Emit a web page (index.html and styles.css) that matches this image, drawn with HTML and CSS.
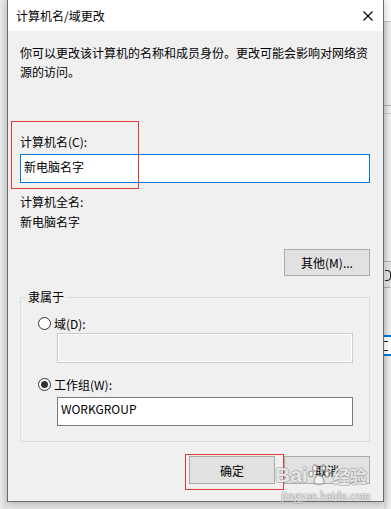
FILE: index.html
```html
<!DOCTYPE html>
<html lang="zh-CN">
<head>
    <meta charset="UTF-8">
    <meta name="viewport" content="width=device-width, initial-scale=1.0">
    <title>计算机名/域更改</title>
    <link rel="stylesheet" href="styles.css">
</head>
<body>
    <div class="screen">
        <div class="side side-left"></div>

        <div class="dialog">
            <div class="titlebar">
                <span class="title">计算机名/域更改</span>
                <svg class="close" width="10" height="10" viewBox="0 0 10 10">
                    <path d="M0.5 0.5 L9.5 9.5 M9.5 0.5 L0.5 9.5" stroke="#000" stroke-width="1.1" fill="none"/>
                </svg>
            </div>

            <div class="content">
                <p class="desc">你可以更改该计算机的名称和成员身份。更改可能会影响对网络资源的访问。</p>

                <div class="field-label">计算机名(C):</div>
                <div class="text-input focused">新电脑名字</div>

                <div class="info-label">计算机全名:</div>
                <div class="info-value">新电脑名字</div>

                <div class="row-right">
                    <button class="btn btn-more">其他(M)...</button>
                </div>

                <fieldset class="group">
                    <legend>隶属于</legend>

                    <div class="radio-row first">
                        <span class="radio"></span>
                        <span>域(D):</span>
                    </div>
                    <div class="text-input group-input disabled"></div>

                    <div class="radio-row second">
                        <span class="radio checked"></span>
                        <span>工作组(W):</span>
                    </div>
                    <div class="text-input group-input workgroup">WORKGROUP</div>
                </fieldset>

                <div class="actions">
                    <button class="btn">确定</button>
                    <button class="btn">取消</button>
                </div>
            </div>
        </div>

        <div class="side side-right">
            <div class="bg-top"></div>
            <div class="bg-line line-a"></div>
            <div class="bg-line line-b"></div>
            <div class="bg-button"></div>
            <div class="bg-input"></div>
        </div>

        <!-- annotation boxes drawn on top of the screenshot -->
        <div class="mark mark-name"></div>
        <div class="mark mark-ok"></div>

        <div class="watermark">
            <div class="wm-logo">
                <span>Bai</span>
                <svg class="wm-paw" width="24" height="24" viewBox="0 0 24 24">
                    <g fill="rgba(255,255,255,0.6)" stroke="rgba(120,120,120,0.6)" stroke-width="1.3">
                        <ellipse cx="7" cy="5" rx="2.5" ry="3"/>
                        <ellipse cx="15" cy="5" rx="2.5" ry="3"/>
                        <ellipse cx="3" cy="11" rx="2.2" ry="2.8"/>
                        <ellipse cx="19" cy="11" rx="2.2" ry="2.8"/>
                        <path d="M6 20 C6 14 9 12 11 12 C13 12 16 14 16 20 C14 22 8 22 6 20 Z"/>
                    </g>
                </svg>
                <span class="wm-cn">经验</span>
            </div>
            <div class="wm-url">jingyan.baidu.com</div>
        </div>
    </div>
</body>
</html>
```

FILE: styles.css
```css
* {
    box-sizing: border-box;
}

body {
    margin: 0;
    background-color: #e6e6e6;
    font-family: "Microsoft YaHei UI", "Noto Sans CJK SC", sans-serif;
    font-size: 12px;
    color: #000;
}

.screen {
    position: relative;
    display: flex;
    width: 391px;
    height: 509px;
    overflow: hidden;
}

.side {
    flex: none;
    width: 7px;
    height: 509px;
}

.side-left {
    background: linear-gradient(to right, #e9e9e9, #dedede);
}

.side-right {
    position: relative;
    width: 8px;
    background: linear-gradient(to right, #d6d6d6, #ececec 5px);
}

.bg-top {
    height: 22px;
    background-color: #fafafa;
    border-bottom: 1px solid #c4c4c4;
}

.bg-line {
    position: absolute;
    left: 0;
    right: 0;
    height: 1px;
    background-color: #a8a8a8;
}

.line-a { top: 105px; }
.line-b { top: 113px; background-color: #c8c8c8; }

.bg-button {
    position: absolute;
    top: 261px;
    left: 0;
    width: 8px;
    height: 27px;
    background-color: #e1e1e1;
    border-top: 1px solid #adadad;
    border-bottom: 1px solid #adadad;
}

.bg-button::after {
    content: "";
    position: absolute;
    left: 1px;
    top: 8px;
    width: 5px;
    height: 9px;
    border: 1px solid #222;
    border-left: none;
    border-radius: 0 4px 4px 0;
}

.bg-input {
    position: absolute;
    top: 335px;
    left: 0;
    width: 8px;
    height: 21px;
    background-color: #fff;
    border-top: 2px solid #0078d7;
    border-bottom: 2px solid #0078d7;
}

.bg-input::after {
    content: "";
    position: absolute;
    left: 0;
    top: 4px;
    width: 4px;
    height: 8px;
    border-top: 1px solid #222;
    border-bottom: 1px solid #222;
}

.dialog {
    position: relative;
    z-index: 1;
    flex: none;
    width: 377px;
    height: 502px;
    background-color: #f0f0f0;
    border: 1px solid #6b6b6b;
    border-top: none;
    box-shadow: 0 2px 7px rgba(0, 0, 0, 0.22);
}

.titlebar {
    display: flex;
    align-items: center;
    justify-content: space-between;
    height: 31px;
    padding: 0 10px 0 8px;
    background-color: #fff;
}

.close {
    display: block;
}

.content {
    padding: 12px 13px 0 12px;
}

.desc {
    margin: 0;
    line-height: 19px;
}

.field-label {
    margin-top: 51px;
    line-height: 20px;
}

.text-input {
    height: 29px;
    padding-left: 3px;
    line-height: 23px;
    background-color: #fff;
    border: 1px solid #7a7a7a;
    white-space: nowrap;
}

.text-input.focused {
    margin-top: 2px;
    border-color: #0078d7;
}

.info-label {
    margin-top: 9px;
    line-height: 20px;
}

.info-value {
    line-height: 20px;
}

.row-right {
    display: flex;
    justify-content: flex-end;
    margin-top: 17px;
}

.btn {
    width: 86px;
    height: 28px;
    padding: 0;
    background-color: #e1e1e1;
    border: 1px solid #adadad;
    font-family: inherit;
    font-size: 12px;
    color: #000;
}

.btn-more {
    height: 27px;
}

.group {
    margin: 11px 0 0;
    padding: 0 0 15px;
    border: 1px solid #dcdcdc;
}

.group legend {
    margin-left: 5px;
    padding: 0 2px;
    line-height: 20px;
}

.radio-row {
    display: flex;
    align-items: center;
    height: 20px;
    padding-left: 17px;
}

.radio-row.first {
    margin-top: 6px;
}

.radio-row.second {
    margin-top: 11px;
}

.radio {
    display: flex;
    align-items: center;
    justify-content: center;
    width: 13px;
    height: 13px;
    margin-right: 3px;
    border: 1px solid #333;
    border-radius: 50%;
    background-color: #fff;
}

.radio.checked::after {
    content: "";
    width: 7px;
    height: 7px;
    border-radius: 50%;
    background-color: #333;
}

.group-input {
    width: 296px;
    margin-left: 36px;
}

.group-input.disabled {
    height: 30px;
    background-color: #f0f0f0;
    border-color: #cccccc;
    box-shadow: inset 0 0 0 1px #fff;
}

.group-input.workgroup {
    margin-top: 3px;
    line-height: 21px;
}

.actions {
    display: flex;
    justify-content: flex-end;
    gap: 9px;
    margin-top: 14px;
}

.mark {
    position: absolute;
    z-index: 2;
    border: 1px solid #e53935;
}

.mark-name {
    left: 11px;
    top: 121px;
    width: 128px;
    height: 68px;
}

.mark-ok {
    left: 185px;
    top: 454px;
    width: 99px;
    height: 36px;
}

.watermark {
    position: absolute;
    z-index: 3;
    left: 275px;
    top: 462px;
    color: rgba(255, 255, 255, 0.8);
    text-shadow: -1px 0 rgba(130, 130, 130, 0.45), 1px 0 rgba(130, 130, 130, 0.45),
                 0 -1px rgba(130, 130, 130, 0.45), 0 1px rgba(130, 130, 130, 0.45);
    pointer-events: none;
}

.wm-logo {
    display: flex;
    align-items: center;
    height: 26px;
    font-family: "Liberation Sans", sans-serif;
    font-size: 21px;
    font-weight: bold;
}

.wm-paw {
    margin: 0 1px 0 0;
}

.wm-cn {
    font-family: "Noto Sans CJK SC", sans-serif;
    font-size: 17px;
}

.wm-url {
    margin-top: 2px;
    padding-left: 6px;
    font-family: "Liberation Serif", serif;
    font-size: 12px;
    line-height: 12px;
}
```
